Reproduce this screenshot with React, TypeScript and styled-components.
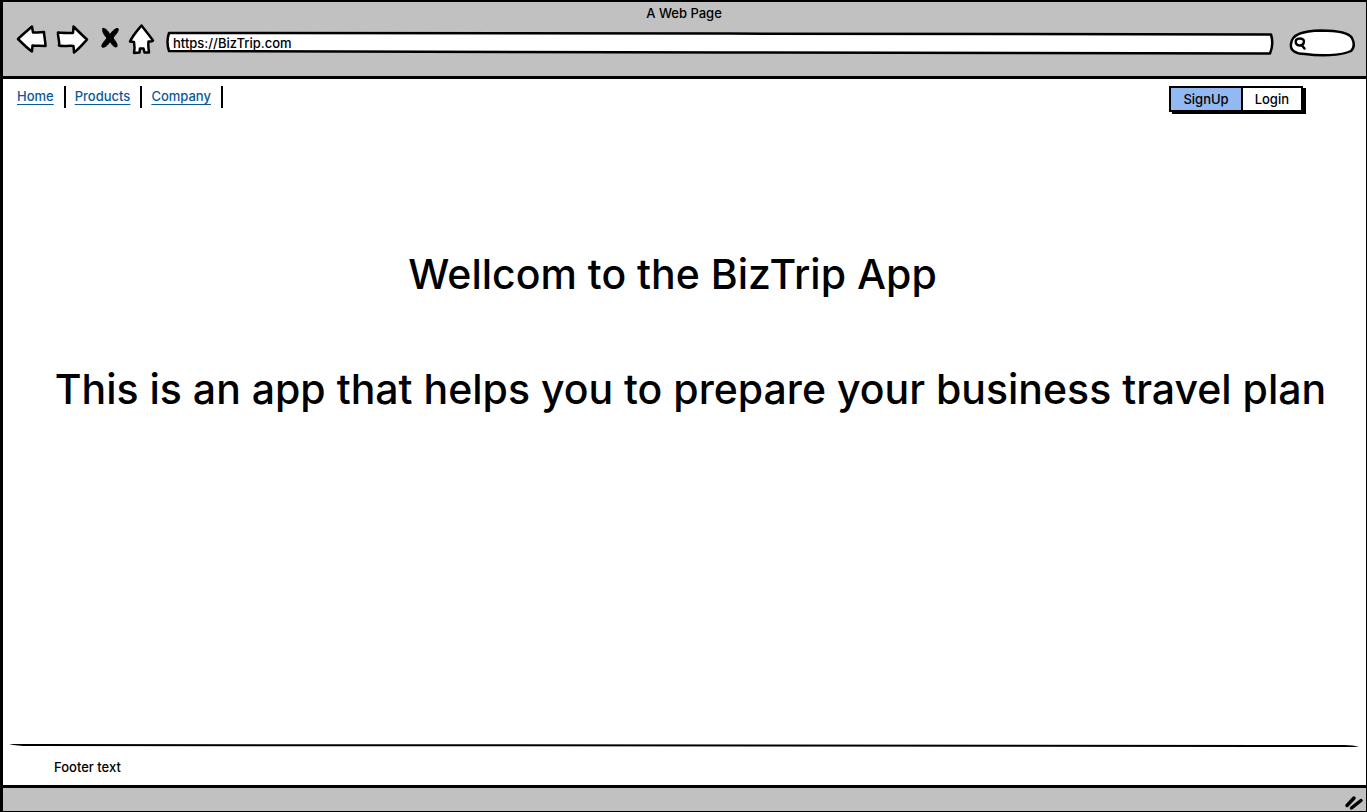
import React from 'react';
import styled, { createGlobalStyle } from 'styled-components';

const INK = '#000';
const CHROME = '#c1c1c1';
const LINK = '#0a5a9c';
const SELECTED = '#92b9f2';

const GlobalStyle = createGlobalStyle`
  *, *::before, *::after { box-sizing: border-box; }
  body {
    margin: 0;
    background: #fff;
    color: ${INK};
    font-family: Inter, "Open Sans", sans-serif;
    font-size: 13px;
    font-weight: 500;
    line-height: 16px;
  }
`;

const BrowserWindow = styled.div`
  display: flex;
  flex-direction: column;
  min-height: 100vh;
  border: solid ${INK};
  border-width: 1px 1px 1px 3px;
`;

const Chrome = styled.header`
  display: flex;
  flex-direction: column;
  height: 78px;
  padding: 3px 11px 0 12px;
  background: ${CHROME};
  border-top: 1px solid ${INK};
  border-bottom: 3px solid ${INK};
`;

const WindowTitle = styled.div`
  padding-right: 2px;
  text-align: center;
`;

const Toolbar = styled.div`
  display: flex;
  align-items: center;
  height: 40px;
  margin-top: 2px;
`;

const ToolButtons = styled.div`
  display: flex;
  align-items: center;
  gap: 9px;
  margin-right: 12px;
  padding-bottom: 8px;
`;

const ToolButton = styled.button`
  display: flex;
  padding: 0;
  border: 0;
  background: none;
  cursor: pointer;
`;

const Sketch = styled.svg`
  display: block;
  overflow: visible;
  fill: #fff;
  stroke: ${INK};
  stroke-width: 2.5;
  stroke-linejoin: round;
  stroke-linecap: round;
`;

const Outline = styled(Sketch)`
  position: absolute;
  inset: 0;
  width: 100%;
  height: 100%;
  pointer-events: none;

  path { vector-effect: non-scaling-stroke; }
`;

const AddressBar = styled.label`
  position: relative;
  flex: 1;
  height: 22px;
  margin-right: 15px;
`;

const SearchBox = styled.label`
  position: relative;
  display: flex;
  align-items: center;
  width: 66px;
  height: 26px;
  padding-left: 5px;
`;

const ChromeInput = styled.input`
  position: relative;
  display: block;
  width: 100%;
  min-width: 0;
  height: 22px;
  padding: 0 7px;
  border: 0;
  outline: 0;
  background: none;
  color: inherit;
  font: inherit;
`;

const Magnifier = styled(Sketch)`
  position: relative;
  flex: none;
  fill: none;
`;

const Page = styled.div`
  display: flex;
  flex: 1;
  flex-direction: column;
`;

const TopBar = styled.div`
  display: flex;
  align-items: flex-start;
  justify-content: space-between;
  padding: 7px 63px 0 14px;
`;

const Links = styled.nav`
  display: flex;
`;

const NavItem = styled.div`
  height: 22px;
  margin-right: 9px;
  padding: 2px 10px 0 0;
  border-right: 2px solid ${INK};
`;

const NavLink = styled.a`
  color: ${LINK};
  text-decoration: underline 1px;
  text-underline-offset: 3px;
  text-decoration-skip-ink: none;
`;

const ButtonBar = styled.div`
  display: flex;
  border: 2px solid ${INK};
  box-shadow: 3px 2px 0 ${INK};
`;

const BarButton = styled.button<{ $selected?: boolean }>`
  height: 22px;
  padding: 0 12px;
  border: 0;
  background: ${(p) => (p.$selected ? SELECTED : '#fff')};
  color: inherit;
  font: inherit;
  cursor: pointer;

  & + & { border-left: 2px solid ${INK}; }
`;

const Hero = styled.main`
  flex: 1;
  padding-top: 136px;
  font-size: 41px;
  line-height: 52px;
  text-align: center;
`;

const Welcome = styled.h1`
  margin: 0 24px 63px 0;
  font: inherit;
`;

const Tagline = styled.p`
  margin: 0 0 0 12px;
`;

const PageFooter = styled.footer`
  padding: 0 7px 0 6px;
`;

const FooterRule = styled.svg`
  display: block;
  width: 100%;
  height: 4px;
`;

const FooterText = styled.p`
  margin: 0;
  padding: 11px 0 10px 45px;
`;

const StatusBar = styled.div`
  display: flex;
  align-items: flex-end;
  justify-content: flex-end;
  height: 26px;
  padding: 0 3px 1px 0;
  border-top: 3px solid ${INK};
  background: ${CHROME};
`;

const links = ['Home', 'Products', 'Company'];

export default function App() {
  return (
    <>
      <GlobalStyle />
      <BrowserWindow>
        <Chrome>
          <WindowTitle>A Web Page</WindowTitle>
          <Toolbar>
            <ToolButtons>
              <ToolButton aria-label="Back">
                <Sketch width="32" height="30" viewBox="0 0 32 30">
                  <path d="M3 15 C7 11 12 7 17 2.500 L18 8.500 C22 9 26 8 29 8 C29 12 30.500 17 30.500 22 C26 21.500 22 22 17.500 21.500 L17 27.500 C12 24 8 20 3 15Z" />
                </Sketch>
              </ToolButton>
              <ToolButton aria-label="Forward">
                <Sketch width="32" height="30" viewBox="0 0 32 30">
                  <path d="M2 8.500 C7 9 12 9 17 9 L17.500 2.500 C22 7 26 11 31 15.500 C27 20 23 25 18 28.500 L17.500 22 C13 21 8 23 3 21.500 C4 17 1.500 13 2 8.500Z" />
                </Sketch>
              </ToolButton>
              <ToolButton aria-label="Stop">
                <Sketch width="22" height="28" viewBox="0 0 22 28">
                  <path
                    d="M6 3.500 C9 3 11.500 7 13 9.500 C15 6.500 18 3 21 3.500 C22.500 6 18 10 16 13 C18.500 16 21.500 20.500 19.500 22 C17 22.500 14.500 19 13 16.500 C11 20 8 23 5 22 C4 20 7.500 16 10 13 C7.500 10.500 4.500 6 6 3.500Z"
                    fill={INK}
                    strokeWidth="1"
                  />
                </Sketch>
              </ToolButton>
              <ToolButton aria-label="Home page">
                <Sketch width="26" height="30" viewBox="0 0 26 30">
                  <path d="M13.500 1.500 C17 6 21 11 25 16.500 C23.500 18 22 17.500 20.500 17.500 C20 21 20.500 25 21 28.500 L16.500 28.500 L15.500 24.500 L12 24.500 L11.500 28.500 L6 29 C7 25 6.500 21 6 18 L2 17.500 C5 11 9 7 13.500 1.500Z" />
                </Sketch>
              </ToolButton>
            </ToolButtons>
            <AddressBar>
              <Outline viewBox="0 0 1108 22" preserveAspectRatio="none">
                <path d="M3 1 C300 0 800 3 1105 2.500 Q1108 12 1104 21.500 C800 22 300 19 3 19 Q0 10 3 1Z" />
              </Outline>
              <ChromeInput aria-label="Address" defaultValue="https://BizTrip.com" />
            </AddressBar>
            <SearchBox>
              <Outline viewBox="0 0 66 26" preserveAspectRatio="none">
                <path d="M2 14 C3 4 14 1 32 0.500 C48 0.500 60 3 63 8 C65.500 13 65 18 62 21 C52 26 30 26 16 24 C6 24 1 20 2 14Z" />
              </Outline>
              <Magnifier width="12" height="14" viewBox="0 0 12 14">
                <path d="M6 2.500 C2 2.500 1 5 2 7.500 C4 10.500 8 10 9.500 7.500 C11 4 9 2.500 6 2.500Z M8 9.500 L10.500 12.500" />
              </Magnifier>
              <ChromeInput type="search" aria-label="Search" />
            </SearchBox>
          </Toolbar>
        </Chrome>

        <Page>
          <TopBar>
            <Links>
              {links.map((name) => (
                <NavItem key={name}>
                  <NavLink href="#">{name}</NavLink>
                </NavItem>
              ))}
            </Links>
            <ButtonBar>
              <BarButton $selected>SignUp</BarButton>
              <BarButton>Login</BarButton>
            </ButtonBar>
          </TopBar>

          <Hero>
            <Welcome>Wellcom to the BizTrip App</Welcome>
            <Tagline>This is an app that helps you to prepare your business travel plan</Tagline>
          </Hero>

          <PageFooter>
            <FooterRule viewBox="0 0 1350 4" preserveAspectRatio="none" aria-hidden="true">
              <path d="M0 0 Q10 0 20 0 L1335 1 Q1345 1 1350 3 Q1340 3 1320 3 L20 2 Q8 2 0 0Z" />
            </FooterRule>
            <FooterText>Footer text</FooterText>
          </PageFooter>
        </Page>

        <StatusBar>
          <Sketch width="18" height="14" viewBox="0 0 18 14" aria-hidden="true">
            <path d="M2 9.500 L9 2 M6.500 12 L16 4.500" strokeWidth="3.500" />
          </Sketch>
        </StatusBar>
      </BrowserWindow>
    </>
  );
}
